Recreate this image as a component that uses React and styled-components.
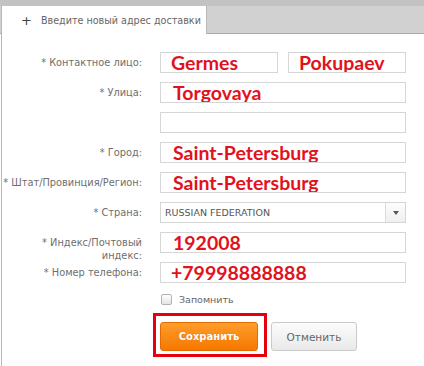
import React from 'react';
import styled, { createGlobalStyle } from 'styled-components';

const GlobalStyle = createGlobalStyle`
  html, body {
    margin: 0;
    padding: 0;
    background: #fff;
  }
  body {
    font-family: "DejaVu Sans", Verdana, sans-serif;
  }
`;

const Page = styled.div`
  width: 424px;
  height: 366px;
  overflow: hidden;
  background: #fff;
`;

const TabBar = styled.div`
  display: flex;
  align-items: flex-end;
  height: 27px;
  background: #d1d1d1;
  border-top: 6px solid #c2c2c2;
  border-bottom: 1px solid #ababab;
  padding-left: 1px;
`;

const Tab = styled.div`
  display: flex;
  align-items: center;
  gap: 9px;
  width: 206px;
  height: 28px;
  margin-bottom: -1px;
  padding-left: 19px;
  box-sizing: border-box;
  background: #fff;
  border-left: 1px solid #b8b8b8;
  border-right: 1px solid #b8b8b8;
  color: #666;
  font-size: 9.6px;
  white-space: nowrap;

  b {
    font-weight: normal;
    font-size: 13px;
    color: #444;
  }
`;

const Panel = styled.div`
  margin-left: 1px;
  border-left: 1px solid #b8b8b8;
  height: 340px;
  padding-top: 18px;
  box-sizing: border-box;
`;

const Form = styled.div`
  display: grid;
  grid-template-columns: 140px 246px;
  column-gap: 18px;
  row-gap: 9px;
  align-items: start;
`;

const Label = styled.div`
  grid-column: 1;
  height: 21px;
  text-align: right;
  white-space: nowrap;
  font-size: 9.8px;
  line-height: 13px;
  padding-top: 4px;
  box-sizing: border-box;
  color: #6e6e6e;
`;

const Field = styled.div`
  grid-column: 2;
  display: grid;
  grid-template-columns: ${({ $split }) => ($split ? '1fr 1fr' : '1fr')};
  column-gap: 10px;
`;

const Input = styled.div`
  height: 21px;
  box-sizing: border-box;
  border: 1px solid #d6d6d6;
  background: #fff;
  padding-left: ${({ $pad }) => $pad || 10}px;
  display: flex;
  align-items: center;
  color: #e2121c;
  font-family: Lato, "Open Sans", sans-serif;
  font-weight: 700;
  font-size: 19.5px;
  line-height: 1;
  overflow: hidden;
  white-space: nowrap;
`;

const Select = styled.div`
  height: 21px;
  box-sizing: border-box;
  border: 1px solid #d6d6d6;
  display: flex;
  align-items: stretch;
  color: #555;
  font-size: 9.5px;
`;

const SelectValue = styled.div`
  flex: 1;
  display: flex;
  align-items: center;
  padding-left: 4px;
`;

const SelectArrow = styled.div`
  width: 19px;
  border-left: 1px solid #dcdcdc;
  background: linear-gradient(#fdfdfd, #efefef);
  display: flex;
  align-items: center;
  justify-content: center;

  &::after {
    content: '';
    border-left: 3.5px solid transparent;
    border-right: 3.5px solid transparent;
    border-top: 4px solid #555;
  }
`;

const CheckRow = styled.label`
  grid-column: 2;
  display: flex;
  align-items: center;
  gap: 7px;
  height: 14px;
  padding-left: 1px;
  font-size: 9.5px;
  color: #666;
`;

const Check = styled.span`
  width: 9px;
  height: 9px;
  border: 1px solid #b2b2b2;
  border-radius: 2px;
  background: linear-gradient(#fff, #e4e4e4);
`;

const Buttons = styled.div`
  grid-column: 2;
  display: flex;
  align-items: center;
  gap: 4px;
  margin-left: -7px;
  margin-top: -2px;
`;

const Highlight = styled.div`
  border: 3px solid #e4000d;
  padding: 6px 6px 3px 4px;
`;

const Button = styled.button`
  height: 29px;
  border-radius: 3px;
  font-family: "DejaVu Sans", Verdana, sans-serif;
  cursor: pointer;
  padding: 0;
`;

const SaveButton = styled(Button)`
  width: 98px;
  border: 1px solid #e56b00;
  background: linear-gradient(#ff9d2a, #f57800);
  color: #fff;
  font-weight: 700;
  font-size: 10px;
  text-shadow: 0 0 1px rgba(180, 70, 0, 0.5);
`;

const CancelButton = styled(Button)`
  width: 86px;
  border: 1px solid #cacaca;
  background: linear-gradient(#fcfcfc, #e9e9e9);
  color: #666;
  font-size: 10.5px;
  margin-top: 3px;
`;

const rows = [
  { label: '* Улица:', value: 'Torgovaya', pad: 12 },
  { label: '', value: '' },
  { label: '* Город:', value: 'Saint-Petersburg', pad: 12 },
  { label: '* Штат/Провинция/Регион:', value: 'Saint-Petersburg', pad: 12 },
];

const App = () => (
  <Page>
    <GlobalStyle />
    <TabBar>
      <Tab>
        <b>+</b>
        <span>Введите новый адрес доставки</span>
      </Tab>
    </TabBar>
    <Panel>
      <Form>
        <Label>* Контактное лицо:</Label>
        <Field $split>
          <Input>Germes</Input>
          <Input>Pokupaev</Input>
        </Field>

        {rows.map((r, i) => (
          <React.Fragment key={i}>
            <Label>{r.label}</Label>
            <Field>
              <Input $pad={r.pad}>{r.value}</Input>
            </Field>
          </React.Fragment>
        ))}

        <Label>* Страна:</Label>
        <Field>
          <Select>
            <SelectValue>RUSSIAN FEDERATION</SelectValue>
            <SelectArrow />
          </Select>
        </Field>

        <Label>
          * Индекс/Почтовый
          <br />
          индекс:
        </Label>
        <Field>
          <Input $pad={12}>192008</Input>
        </Field>

        <Label>* Номер телефона:</Label>
        <Field>
          <Input>+79998888888</Input>
        </Field>

        <CheckRow>
          <Check />
          Запомнить
        </CheckRow>

        <Buttons>
          <Highlight>
            <SaveButton>Сохранить</SaveButton>
          </Highlight>
          <CancelButton>Отменить</CancelButton>
        </Buttons>
      </Form>
    </Panel>
  </Page>
);

export default App;
